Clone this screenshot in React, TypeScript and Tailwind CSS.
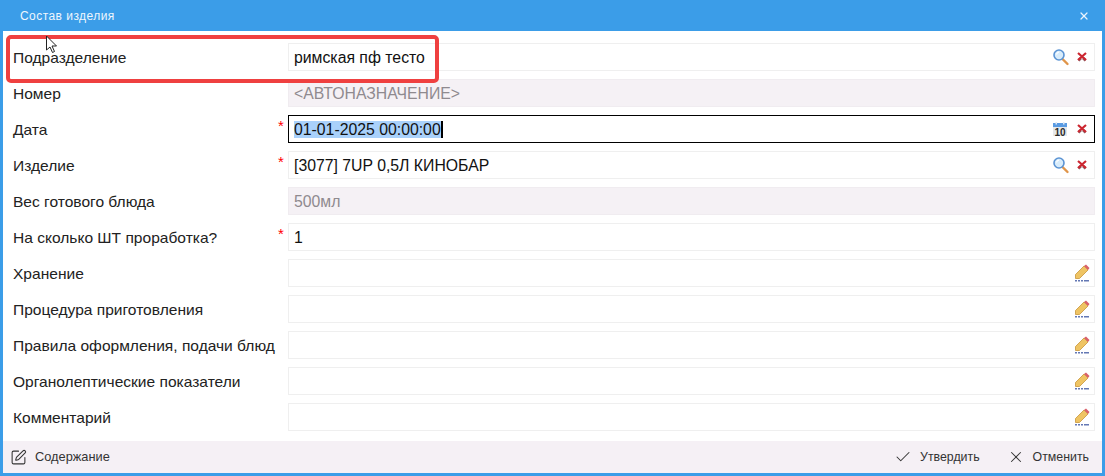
import { Check, SquarePen, X } from 'lucide-react';

const SearchIcon = () => (
  <svg width="18" height="18" viewBox="0 0 18 18" fill="none">
    <path d="M10.5 11 L15.5 16" stroke="#e0954a" strokeWidth="2.4" strokeLinecap="round" />
    <circle cx="7" cy="7" r="5" fill="#d8ecfb" stroke="#5b93d3" strokeWidth="1.6" />
    <path d="M4.5 6.5 A3 3 0 0 1 7 4" stroke="#ffffff" strokeWidth="1.2" />
  </svg>
);

const ClearIcon = () => (
  <svg width="12" height="12" viewBox="0 0 12 12" fill="none">
    <path d="M2.5 9.5 L5 7 M7 7 L9.5 9.5" stroke="#8f5a5f" strokeWidth="2.6" />
    <path d="M2 2 L10 9 M10 2 L2 9" stroke="#cc2630" strokeWidth="2.2" />
  </svg>
);

const CalendarIcon = () => (
  <svg width="16" height="16" viewBox="0 0 16 16">
    <rect x="1" y="2" width="14" height="13" fill="#e6e8ea" />
    <rect x="1" y="2" width="14" height="4" fill="#5a9be2" />
    <rect x="3.5" y="1" width="1.5" height="2.5" fill="#dfe9f5" />
    <rect x="11" y="1" width="1.5" height="2.5" fill="#dfe9f5" />
    <text x="8" y="14.5" textAnchor="middle" fontSize="10" fontWeight="700" fill="#2b2b2b" fontFamily="'Liberation Sans', sans-serif">
      10
    </text>
  </svg>
);

const PencilIcon = () => (
  <svg width="16" height="18" viewBox="0 0 16 18">
    <path d="M1.5 10.5 L10 2 L14 6 L5.5 14.5 L1.5 14.5 Z" fill="#efc463" stroke="#c8953a" strokeWidth="0.8" />
    <path d="M10 2 L12 0.5 L15.5 4 L14 6 Z" fill="#d9616a" />
    <rect x="1" y="16" width="2" height="1.5" fill="#6478b4" />
    <rect x="4" y="16" width="2" height="1.5" fill="#6478b4" />
    <rect x="7" y="16" width="2" height="1.5" fill="#6478b4" />
    <rect x="10" y="16" width="5" height="1.5" fill="#6478b4" />
  </svg>
);

type RowProps = {
  label: string;
  value?: string;
  required?: boolean;
  readOnly?: boolean;
  focused?: boolean;
  icons?: 'search' | 'calendar' | 'pencil';
};

const Row = ({ label, value, required, readOnly, focused, icons }: RowProps) => (
  <div className="flex h-7 items-center">
    <div className="w-[275px] pl-[10px] pt-[2px] text-[15.55px] text-[#222]">{label}</div>
    <div className="w-[10px] h-full text-[15px] leading-[22px] text-[#f00]">{required ? '*' : ''}</div>
    <div
      className={
        focused
          ? 'flex h-7 flex-1 items-center border border-black bg-white pl-[5px] pr-[6px]'
          : readOnly
            ? 'flex h-7 flex-1 items-center border border-[#f0ecf0] bg-[#f5f1f5] pl-[5px] pr-[6px]'
            : 'flex h-7 flex-1 items-center border border-[#efefef] bg-white pl-[5px] pr-[6px]'
      }
    >
      <div className={readOnly ? 'flex-1 pt-[2px] text-[15.8px] text-[#8f8a8f]' : 'flex-1 pt-[2px] text-[15.8px] text-[#111]'}>
        {focused ? (
          <span className="border-r-2 border-black bg-[#a9d1fb]">{value}</span>
        ) : (
          value
        )}
      </div>
      {icons === 'search' && (
        <div className="flex items-center gap-[6px]">
          <SearchIcon />
          <ClearIcon />
        </div>
      )}
      {icons === 'calendar' && (
        <div className="flex items-center gap-[8px]">
          <CalendarIcon />
          <ClearIcon />
        </div>
      )}
      {icons === 'pencil' && (
        <div className="mr-[-2px]">
          <PencilIcon />
        </div>
      )}
    </div>
  </div>
);

export default function App() {
  return (
    <div className="relative flex h-[476px] w-[1105px] flex-col overflow-hidden bg-[#3b9de8] font-['Liberation_Sans',Arial,sans-serif]">
      {/* Title bar */}
      <div className="flex h-[31px] shrink-0 items-center justify-between pl-[20px] pr-[15px] text-[12px] tracking-[0.45px] text-[#eef6fd]">
        <span>Состав изделия</span>
        <X size={12} strokeWidth={2.5} className="text-[#eaf4fd]" />
      </div>

      <div className="mx-[3px] flex flex-1 flex-col bg-white">
        <div className="flex flex-1 flex-col gap-2 pl-0 pr-[7px] pt-[12px]">
          <Row label="Подразделение" value="римская пф тесто" icons="search" />
          <Row label="Номер" value="<АВТОНАЗНАЧЕНИЕ>" readOnly />
          <Row label="Дата" value="01-01-2025 00:00:00" required focused icons="calendar" />
          <Row label="Изделие" value="[3077] 7UP 0,5Л КИНОБАР" required icons="search" />
          <Row label="Вес готового блюда" value="500мл" readOnly />
          <Row label="На сколько ШТ проработка?" value="1" required />
          <Row label="Хранение" icons="pencil" />
          <Row label="Процедура приготовления" icons="pencil" />
          <Row label="Правила оформления, подачи блюд" icons="pencil" />
          <Row label="Органолептические показатели" icons="pencil" />
          <Row label="Комментарий" icons="pencil" />
        </div>

        {/* Footer */}
        <div className="flex h-[32px] shrink-0 items-center justify-between bg-[#f5f0f5] pl-[7px] pr-[13px] text-[12.8px] text-[#333]">
          <div className="flex items-center gap-[8px]">
            <SquarePen size={17} strokeWidth={1.5} />
            <span>Содержание</span>
          </div>
          <div className="flex items-center gap-[27px] text-[12.35px]">
            <div className="flex items-center gap-[8px]">
              <Check size={18} strokeWidth={1.4} />
              <span>Утвердить</span>
            </div>
            <div className="flex items-center gap-[8px]">
              <X size={18} strokeWidth={1.4} />
              <span>Отменить</span>
            </div>
          </div>
        </div>
      </div>
      <div className="h-[3px] shrink-0" />

      {/* Annotation over the form */}
      <div className="absolute left-[6px] top-[35px] h-[48px] w-[433px] rounded-[5px] border-[4px] border-[#ef4040]" />

      {/* Mouse cursor */}
      <svg className="absolute left-[45px] top-[35px]" width="14" height="20" viewBox="0 0 14 20">
        <path d="M1.5 1 L1.5 15 L5 12 L7.5 17.5 L9.5 16.5 L7 11 L11.5 11 Z" fill="#fff" stroke="#222" strokeWidth="1" />
      </svg>
    </div>
  );
}
